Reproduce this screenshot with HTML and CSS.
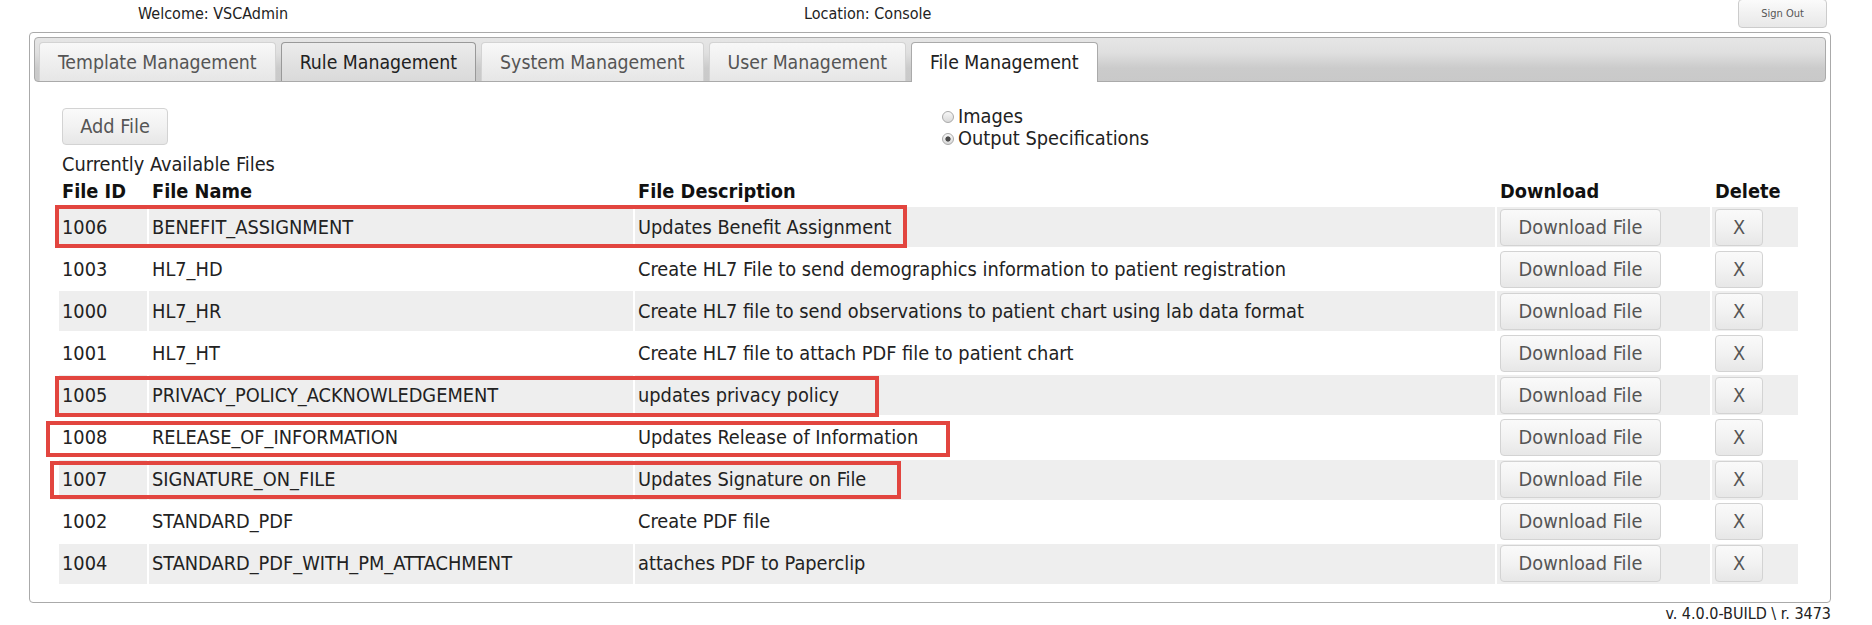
FILE: index.html
```html
<!DOCTYPE html>
<html lang="en">
<head>
    <meta charset="UTF-8">
    <title>File Management</title>
    <link rel="stylesheet" href="styles.css">
</head>
<body>
    <!-- Header -->
    <div class="topbar">
        <span class="welcome">Welcome: VSCAdmin</span>
        <span class="location">Location: Console</span>
        <button class="signout">Sign Out</button>
    </div>

    <div class="panel">
        <ul class="tabs">
            <li class="tab">Template Management</li>
            <li class="tab tab-hover">Rule Management</li>
            <li class="tab">System Management</li>
            <li class="tab">User Management</li>
            <li class="tab active">File Management</li>
        </ul>

        <div class="panel-body">
            <div class="toolbar">
                <button class="btn add-btn">Add File</button>
                <div class="file-types">
                    <label class="radio"><span class="dot"></span>Images</label>
                    <label class="radio checked"><span class="dot"></span>Output Specifications</label>
                </div>
            </div>

            <div class="caption">Currently Available Files</div>

            <div class="table-wrap">
                <table class="files">
                    <thead>
                        <tr>
                            <th class="col-id">File ID</th>
                            <th class="col-name">File Name</th>
                            <th class="col-desc">File Description</th>
                            <th class="col-dl">Download</th>
                            <th class="col-del">Delete</th>
                        </tr>
                    </thead>
                    <tbody>
                        <tr class="odd">
                            <td>1006</td>
                            <td>BENEFIT_ASSIGNMENT</td>
                            <td>Updates Benefit Assignment</td>
                            <td><button class="btn dl-btn">Download File</button></td>
                            <td><button class="btn del-btn">X</button></td>
                        </tr>
                        <tr>
                            <td>1003</td>
                            <td>HL7_HD</td>
                            <td>Create HL7 File to send demographics information to patient registration</td>
                            <td><button class="btn dl-btn">Download File</button></td>
                            <td><button class="btn del-btn">X</button></td>
                        </tr>
                        <tr class="odd">
                            <td>1000</td>
                            <td>HL7_HR</td>
                            <td>Create HL7 file to send observations to patient chart using lab data format</td>
                            <td><button class="btn dl-btn">Download File</button></td>
                            <td><button class="btn del-btn">X</button></td>
                        </tr>
                        <tr>
                            <td>1001</td>
                            <td>HL7_HT</td>
                            <td>Create HL7 file to attach PDF file to patient chart</td>
                            <td><button class="btn dl-btn">Download File</button></td>
                            <td><button class="btn del-btn">X</button></td>
                        </tr>
                        <tr class="odd">
                            <td>1005</td>
                            <td>PRIVACY_POLICY_ACKNOWLEDGEMENT</td>
                            <td>updates privacy policy</td>
                            <td><button class="btn dl-btn">Download File</button></td>
                            <td><button class="btn del-btn">X</button></td>
                        </tr>
                        <tr>
                            <td>1008</td>
                            <td>RELEASE_OF_INFORMATION</td>
                            <td>Updates Release of Information</td>
                            <td><button class="btn dl-btn">Download File</button></td>
                            <td><button class="btn del-btn">X</button></td>
                        </tr>
                        <tr class="odd">
                            <td>1007</td>
                            <td>SIGNATURE_ON_FILE</td>
                            <td>Updates Signature on File</td>
                            <td><button class="btn dl-btn">Download File</button></td>
                            <td><button class="btn del-btn">X</button></td>
                        </tr>
                        <tr>
                            <td>1002</td>
                            <td>STANDARD_PDF</td>
                            <td>Create PDF file</td>
                            <td><button class="btn dl-btn">Download File</button></td>
                            <td><button class="btn del-btn">X</button></td>
                        </tr>
                        <tr class="odd">
                            <td>1004</td>
                            <td>STANDARD_PDF_WITH_PM_ATTACHMENT</td>
                            <td>attaches PDF to Paperclip</td>
                            <td><button class="btn dl-btn">Download File</button></td>
                            <td><button class="btn del-btn">X</button></td>
                        </tr>
                    </tbody>
                </table>

                <!-- review highlights drawn over the table -->
                <div class="mark mark-benefit"></div>
                <div class="mark mark-privacy"></div>
                <div class="mark mark-release"></div>
                <div class="mark mark-signature"></div>
            </div>
        </div>
    </div>

    <div class="version">v. 4.0.0-BUILD \ r. 3473</div>
</body>
</html>
```

FILE: styles.css
```css
* {
    box-sizing: border-box;
}

body {
    margin: 0;
    font-family: "DejaVu Sans Condensed", "DejaVu Sans", sans-serif;
    font-stretch: condensed;
    font-size: 19.8px;
    color: #222;
    background: #fff;
}

/* header */
.topbar {
    display: flex;
    align-items: flex-start;
    height: 32px;
    padding-left: 138px;
}

.welcome,
.location {
    font-size: 16px;
    line-height: 28px;
}

.welcome {
    width: 666px;
}

.location {
    flex: 1;
}

.signout {
    width: 89px;
    height: 29px;
    margin-right: 45px;
    margin-top: -1px;
    font-family: inherit;
    font-stretch: condensed;
    font-size: 11px;
    color: #555;
    border: 1px solid #ccc;
    border-radius: 4px;
    background: linear-gradient(#fbfbfb, #f1f1f1 50%, #e8e8e8);
}

/* panel + tabs */
.panel {
    margin-left: 29px;
    width: 1802px;
    border: 1px solid #aaa;
    border-radius: 4px;
    padding: 4px;
}

.tabs {
    list-style: none;
    margin: 0;
    display: flex;
    align-items: flex-end;
    gap: 5px;
    padding: 4px 4px 0;
    border: 1px solid #aaa;
    border-radius: 4px;
    background: linear-gradient(#e6e6e6 0%, #dfdfdf 35%, #cbcbcb 70%, #c9c9c9 100%);
}

.tab {
    height: 39px;
    line-height: 39px;
    padding: 0 18px;
    font-size: 19.3px;
    color: #555;
    border: 1px solid #d3d3d3;
    border-bottom: 0;
    border-radius: 4px 4px 0 0;
    background: linear-gradient(#f8f8f8, #efefef 50%, #e6e6e6);
    white-space: nowrap;
}

.tab-hover {
    color: #212121;
    border-color: #999;
    background: linear-gradient(#ececec, #e2e2e2 50%, #dadada);
}

.tab.active {
    height: 40px;
    margin-bottom: -1px;
    color: #212121;
    border-color: #aaa;
    background: #fff;
}

.panel-body {
    padding: 24px 26px 12px 23px;
}

/* toolbar */
.toolbar {
    display: flex;
    align-items: flex-start;
    height: 45px;
}

.btn {
    font-family: inherit;
    font-stretch: condensed;
    font-size: 19.8px;
    color: #555;
    height: 37px;
    padding: 0;
    border: 1px solid #d3d3d3;
    border-radius: 4px;
    background: linear-gradient(#fafafa, #f2f2f2 50%, #e7e7e7);
}

.add-btn {
    width: 106px;
    margin: 2px 0 0 5px;
}

.file-types {
    margin-left: 774px;
}

.radio {
    display: flex;
    align-items: center;
    height: 22px;
    line-height: 22px;
}

.dot {
    width: 12px;
    height: 12px;
    margin-right: 4px;
    border: 1px solid #a9a9a9;
    border-radius: 50%;
    background: linear-gradient(#f7f7f7, #d9d9d9);
}

.radio.checked .dot {
    background: radial-gradient(circle, #4a4a4a 0 2.2px, transparent 3px), linear-gradient(#f7f7f7, #d9d9d9);
}

.caption {
    padding: 3px 0 0 5px;
    line-height: 22px;
}

/* files table */
.table-wrap {
    position: relative;
}

.files {
    width: 1743px;
    table-layout: fixed;
    border-collapse: separate;
    border-spacing: 2px;
}

.files th {
    height: 27px;
    padding: 0 3px;
    text-align: left;
    font-weight: bold;
    color: #111;
}

.files td {
    height: 40.1px;
    padding: 0 3px;
    vertical-align: middle;
    white-space: nowrap;
}

.files tr.odd td {
    background: #eee;
}

.col-id { width: 88px; }
.col-name { width: 484px; }
.col-desc { width: 860px; }
.col-dl { width: 213px; }
.col-del { width: 86px; }

.dl-btn {
    width: 161px;
    display: block;
}

.del-btn {
    width: 48px;
    display: block;
}

.mark {
    position: absolute;
    border: 4px solid #e2453f;
}

.mark-benefit {
    left: -2px;
    top: 29px;
    width: 852px;
    height: 43px;
}

.mark-privacy {
    left: -2px;
    top: 200px;
    width: 824px;
    height: 41px;
}

.mark-release {
    left: -11px;
    top: 245px;
    width: 904px;
    height: 36px;
}

.mark-signature {
    left: -7px;
    top: 285px;
    width: 851px;
    height: 38px;
}

.version {
    margin-left: 29px;
    width: 1802px;
    text-align: right;
    font-size: 16px;
    line-height: 22px;
}
```
